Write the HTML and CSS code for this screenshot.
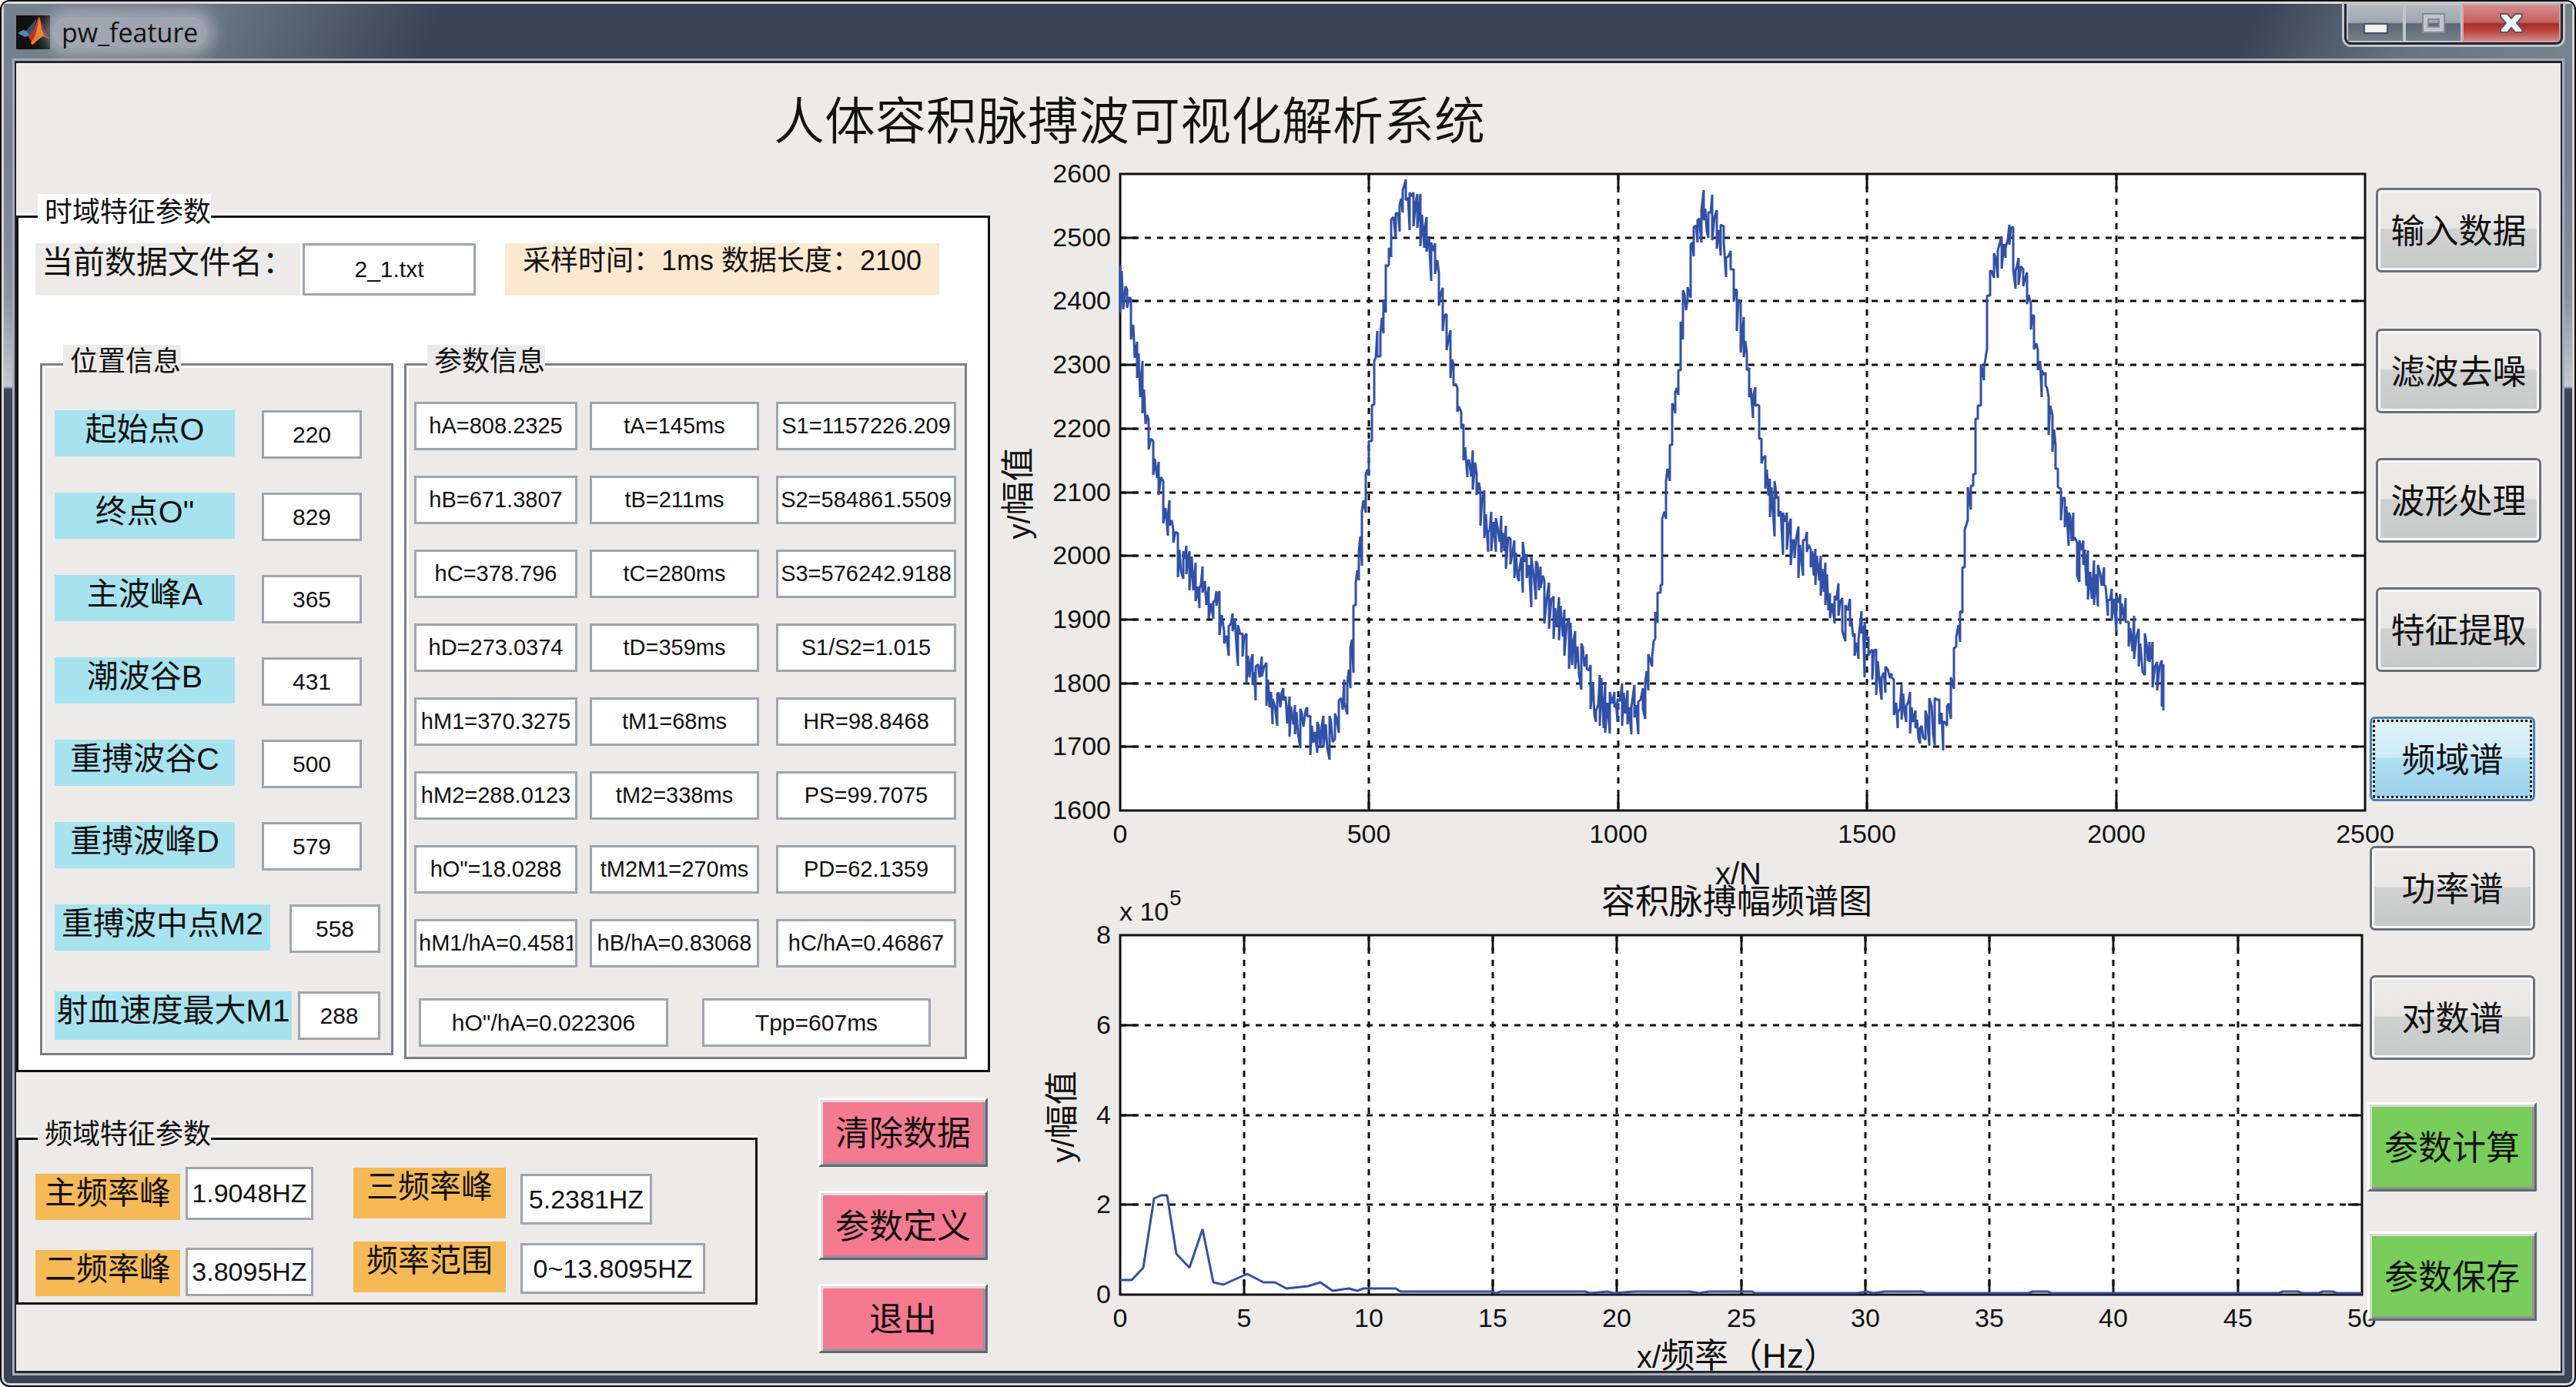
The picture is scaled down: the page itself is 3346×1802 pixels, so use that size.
FILE: index.html
```
<!DOCTYPE html>
<html lang="zh-CN">
<head>
    <meta charset="UTF-8">
    <meta name="viewport" content="width=device-width, initial-scale=1.0">
    <title>pw_feature</title>
    <link rel="stylesheet" href="styles.css">
</head>
<body>
    <div class="window">
        <header class="titlebar">
            <svg class="app-icon" viewBox="0 0 44 44">
                <rect width="44" height="44" fill="#111"/>
                <path d="M2 23 L9 19 L13 20 L22 10 L26 5 L22 20 L15 27 L11 28 Z" fill="#4b87b4"/>
                <path d="M13 20 L22 10 L27 4 L22 20 L17 25 Z" fill="#2c5368"/>
                <path d="M15 27 L22 20 L29 2 L30 2 L30 30 L21 39 L18 31 Z" fill="#b8341c"/>
                <path d="M30 2 L36 18 L43 31 L35 27 L28 32 L21 38 L19 36 L25 26 L28 12 Z" fill="#ee7a26"/>
                <path d="M31 3 L36 17 L43 31 L37 27 L33 18 Z" fill="#8c2416"/>
            </svg>
            <span class="app-name">pw_feature</span>
            <div class="caption">
                <button class="min" aria-label="minimize">
                    <svg viewBox="0 0 32 14"><rect x="1" y="1" width="30" height="12" fill="#f0f0f0" stroke="#4c5166" stroke-width="2"/></svg>
                </button>
                <button class="max" aria-label="maximize">
                    <svg viewBox="0 0 32 28"><path d="M2 2h28v24H2z M9 9h14v10H9z" fill="#c0c5cb" fill-rule="evenodd" stroke="#848c97" stroke-width="2"/></svg>
                </button>
                <button class="close" aria-label="close">
                    <svg viewBox="0 0 32 28"><path d="M2 2h9l5 6 5-6h9v4l-7 8 7 8v4h-9l-5-6-5 6H2v-4l7-8-7-8z" fill="#f2f2f2" stroke="#555768" stroke-width="2"/></svg>
                </button>
            </div>
        </header>

        <div class="client">
            <h1>人体容积脉搏波可视化解析系统</h1>

            <main>
                <section class="left">
                    <fieldset class="panel time">
                        <legend>时域特征参数</legend>
                        <div class="file-row">
                            <label for="file">当前数据文件名：</label>
                            <input id="file" type="text" value="2_1.txt">
                            <p>采样时间：1ms 数据长度：2100</p>
                        </div>
                        <div class="info">
                            <fieldset class="etched">
                                <legend>位置信息</legend>
                                <div class="positions">
                                    <div class="row"><label for="p1">起始点O</label><input id="p1" type="text" value="220"></div>
                                    <div class="row"><label for="p2">终点O"</label><input id="p2" type="text" value="829"></div>
                                    <div class="row"><label for="p3">主波峰A</label><input id="p3" type="text" value="365"></div>
                                    <div class="row"><label for="p4">潮波谷B</label><input id="p4" type="text" value="431"></div>
                                    <div class="row"><label for="p5">重搏波谷C</label><input id="p5" type="text" value="500"></div>
                                    <div class="row"><label for="p6">重搏波峰D</label><input id="p6" type="text" value="579"></div>
                                    <div class="row mid"><label for="p7">重搏波中点M2</label><input id="p7" type="text" value="558"></div>
                                    <div class="row long"><label for="p8">射血速度最大M1</label><input id="p8" type="text" value="288"></div>
                                </div>
                            </fieldset>
                            <fieldset class="etched values">
                                <legend>参数信息</legend>
                                <div class="params">
                                    <input type="text" aria-label="hA" value="hA=808.2325">
                                    <input type="text" aria-label="tA" value="tA=145ms">
                                    <input type="text" aria-label="S1" value="S1=1157226.209">
                                    <input type="text" aria-label="hB" value="hB=671.3807">
                                    <input type="text" aria-label="tB" value="tB=211ms">
                                    <input type="text" aria-label="S2" value="S2=584861.5509">
                                    <input type="text" aria-label="hC" value="hC=378.796">
                                    <input type="text" aria-label="tC" value="tC=280ms">
                                    <input type="text" aria-label="S3" value="S3=576242.9188">
                                    <input type="text" aria-label="hD" value="hD=273.0374">
                                    <input type="text" aria-label="tD" value="tD=359ms">
                                    <input type="text" aria-label="S1/S2" value="S1/S2=1.015">
                                    <input type="text" aria-label="hM1" value="hM1=370.3275">
                                    <input type="text" aria-label="tM1" value="tM1=68ms">
                                    <input type="text" aria-label="HR" value="HR=98.8468">
                                    <input type="text" aria-label="hM2" value="hM2=288.0123">
                                    <input type="text" aria-label="tM2" value="tM2=338ms">
                                    <input type="text" aria-label="PS" value="PS=99.7075">
                                    <input type="text" aria-label="hO" value='hO"=18.0288'>
                                    <input type="text" aria-label="tM2M1" value="tM2M1=270ms">
                                    <input type="text" aria-label="PD" value="PD=62.1359">
                                    <input type="text" aria-label="hM1/hA" value="hM1/hA=0.4581">
                                    <input type="text" aria-label="hB/hA" value="hB/hA=0.83068">
                                    <input type="text" aria-label="hC/hA" value="hC/hA=0.46867">
                                </div>
                                <div class="params-last">
                                    <input class="ratio" type="text" aria-label="hO/hA" value='hO"/hA=0.022306'>
                                    <input class="period" type="text" aria-label="Tpp" value="Tpp=607ms">
                                </div>
                            </fieldset>
                        </div>
                    </fieldset>

                    <div class="bottom">
                        <fieldset class="panel freq">
                            <legend>频域特征参数</legend>
                            <div class="freqs">
                                <div class="col c1">
                                    <label for="f1">主频率峰</label>
                                    <label for="f2">二频率峰</label>
                                </div>
                                <div class="col c2">
                                    <input id="f1" type="text" value="1.9048HZ">
                                    <input id="f2" type="text" value="3.8095HZ">
                                </div>
                                <div class="col c3">
                                    <label for="f3">三频率峰</label>
                                    <label for="f4">频率范围</label>
                                </div>
                                <div class="col c4">
                                    <input id="f3" type="text" value="5.2381HZ">
                                    <input id="f4" type="text" value="0~13.8095HZ">
                                </div>
                            </div>
                        </fieldset>
                        <div class="actions">
                            <button class="flat pink">清除数据</button>
                            <button class="flat pink">参数定义</button>
                            <button class="flat pink">退出</button>
                        </div>
                    </div>
                </section>

                <section class="charts">
                    <svg id="wave" viewBox="0 0 1784 950"></svg>
                    <svg id="spectrum" viewBox="0 0 1784 631"></svg>
                </section>

                <nav class="tools">
                    <button class="win first">输入数据</button>
                    <button class="win shifted">滤波去噪</button>
                    <button class="win shifted">波形处理</button>
                    <button class="win shifted">特征提取</button>
                    <button class="win active">频域谱</button>
                    <button class="win">功率谱</button>
                    <button class="win">对数谱</button>
                    <button class="flat green">参数计算</button>
                    <button class="flat green">参数保存</button>
                </nav>
            </main>
        </div>
    </div>
    <script src="script.js"></script>
</body>
</html>
```
FILE: styles.css
```
* {
    box-sizing: border-box;
}
body {
    margin: 0;
    background: #fff;
    color: #111;
    font-family: "Liberation Sans", "Noto Sans CJK SC", sans-serif;
    font-size: 41px;
}
button, input {
    font-family: inherit;
    color: inherit;
    margin: 0;
}

/* window frame */
.window {
    display: flex;
    flex-direction: column;
    height: 100vh;
    padding: 0 16px 16px 17px;
    border: 2px solid #111;
    border-radius: 12px;
    overflow: hidden;
    background: linear-gradient(#78848f 0, #767f8e 200px, #8a939e 380px, #c5c9d1 500px, #3a4454 504px);
    box-shadow: inset 0 0 0 3px #d4d7da;
}
.titlebar {
    flex: none;
    display: flex;
    align-items: center;
    height: 77px;
    margin: 0 -13px 0 -14px;
    padding: 0 12px 0 16px;
    border-top: 3px solid #dcddde;
    background: linear-gradient(115deg, #76828f 0, #6c7785 8%, #3a4454 17%, #3a4454 87%, #66717f 93%, #78858f 100%);
}
.app-icon {
    width: 44px;
    height: 44px;
}
.app-name {
    margin-left: 3px;
    padding: 0 12px;
    font-family: "Open Sans", sans-serif;
    font-size: 34px;
    line-height: 40px;
    border-radius: 20px;
    background: rgba(178, 184, 192, 0.7);
    box-shadow: 0 0 18px 10px rgba(178, 184, 192, 0.7);
}
.caption {
    align-self: flex-start;
    display: flex;
    height: 53px;
    margin-left: auto;
    border: 3px solid #22262c;
    border-top: 0;
    border-radius: 0 0 9px 9px;
    box-shadow: 0 0 0 3px #bfc6cc;
    overflow: hidden;
}
.caption button {
    display: flex;
    align-items: center;
    justify-content: center;
    width: 75px;
    padding: 0;
    border: 2px solid #c0c6cc;
    background: linear-gradient(#b4b9c0, #a0a7af 48%, #5c6675 52%, #76818e);
}
.caption svg {
    width: 32px;
}
.caption .min {
    padding-top: 14px;
}
.caption .close {
    width: 128px;
    border-color: #d49a9c;
    border-left-color: #e0a0a0;
    background: linear-gradient(#d88a8c, #c4605f 48%, #a32c26 52%, #c04a40 75%, #d08a8c);
}
.client {
    flex: 1;
    min-height: 0;
    border: 3px solid #24272e;
    border-width: 3px 2px;
    box-shadow: 0 0 0 3px #a6adb6;
    background: #ecebe9;
    overflow: hidden;
}
h1 {
    margin: 0;
    height: 118px;
    padding: 37px 0 0 984px;
    font-size: 66px;
    font-weight: 350;
    line-height: 78px;
    white-space: nowrap;
}
main {
    display: grid;
    grid-template-columns: 1269px minmax(0, 1fr) 252px;
}

/* text boxes */
input {
    display: block;
    height: 63px;
    padding: 0 3px;
    border: 3px solid #a0a4ac;
    border-radius: 0;
    background: #fff;
    font-size: 30px;
    text-align: center;
}
label {
    display: block;
    line-height: 50px;
    text-align: center;
    white-space: nowrap;
}

/* group boxes */
fieldset {
    margin: 0;
    padding: 0;
    min-width: 0;
}
legend {
    padding: 0 0 12px 9px;
    font-size: 36px;
    line-height: 47px;
}
.left {
    padding-top: 52px;
}
.panel {
    border: 3px solid #111;
    box-shadow: 0 -3px #fff;
}
.panel > legend {
    margin-left: 25px;
    background: inherit;
}
.time {
    width: 1265px;
    background: #fff;
}
.file-row {
    display: flex;
    padding: 5px 0 0 22px;
}
.file-row label {
    width: 344px;
    height: 68px;
    background: #ecebe9;
}
.file-row input {
    width: 225px;
    height: 68px;
    margin: 0 38px 0 3px;
}
.file-row p {
    width: 564px;
    margin: 0;
    background: #fce9d0;
    font-size: 36px;
    line-height: 45px;
    text-align: center;
}
.info {
    display: flex;
    align-items: flex-start;
    gap: 14px;
    padding: 64px 0 14px 28px;
}
.etched {
    width: 459px;
    border: 3px solid #7b7e86;
    background: #ecebe9;
    box-shadow: inset 3px 3px #fff;
}
.etched > legend {
    margin-left: 27px;
    padding-bottom: 7px;
    line-height: 44px;
    background: #ecebe9;
}
.values {
    width: 731px;
}
.positions {
    display: flex;
    flex-direction: column;
    gap: 44px;
    padding: 34px 0 17px 16px;
}
.row {
    display: flex;
    gap: 35px;
}
.row label {
    width: 234px;
    height: 60px;
    background: #a6e3ee;
}
.row input {
    width: 130px;
}
.row.mid {
    gap: 25px;
}
.mid label {
    width: 280px;
}
.mid input {
    width: 118px;
}
.row.long {
    gap: 8px;
    margin-top: 6px;
}
.long label {
    width: 308px;
    height: 63px;
}
.long input {
    width: 107px;
}
.params {
    display: grid;
    grid-template-columns: 212px 226px 234px;
    gap: 33px 16px;
    padding: 23px 0 0 10px;
}
.params input {
    width: 100%;
    font-size: 29px;
}
.params input:nth-child(3n + 2) {
    max-width: 220px;
}
.params-last {
    display: flex;
    gap: 44px;
    padding: 40px 0 13px 16px;
}
.ratio {
    width: 324px;
}
.period {
    width: 297px;
}

/* frequency panel and buttons under it */
.bottom {
    display: flex;
    align-items: flex-start;
    gap: 79px;
}
.freq {
    width: 963px;
    margin-top: 57px;
    background: #ecebe9;
}
.freqs {
    display: flex;
    padding: 0 0 8px 22px;
}
.col {
    display: flex;
    flex-direction: column;
}
.col label {
    background: #f5b955;
}
.col input {
    font-size: 34px;
}
.c1 {
    width: 195px;
    padding-top: 16px;
    gap: 39px;
}
.c1 label {
    width: 188px;
    height: 60px;
}
.c2 {
    width: 218px;
    padding-top: 7px;
    gap: 36px;
}
.c2 input {
    width: 166px;
}
.c2 input:first-child {
    height: 69px;
}
.c3 {
    width: 217px;
    padding-top: 8px;
    gap: 30px;
}
.c3 label {
    width: 198px;
    height: 66px;
}
.c4 {
    padding-top: 16px;
    gap: 24px;
}
.c4 input {
    width: 240px;
    height: 66px;
}
.c4 input:first-child {
    width: 171px;
}
.actions {
    display: flex;
    flex-direction: column;
    gap: 31px;
    padding-top: 33px;
}

.flat {
    width: 220px;
    padding: 0 0 5px;
    border: 3px solid;
    border-color: #fff #66686e #66686e #fff;
    border-radius: 0;
    font-size: 44px;
    white-space: nowrap;
}
.pink {
    height: 90px;
    background: #f57a8f;
    box-shadow: inset 3px 3px #dddbdb, inset -3px -3px #96979b;
}
.green {
    flex: none;
    height: 116px;
    margin: -3px 0 -3px 1px;
    background: #79cd5b;
    box-shadow: inset 3px 3px #d5dad3, inset -3px -3px #8f9692;
}

/* right-hand tool column */
.tools {
    position: relative;
    display: flex;
    flex-direction: column;
    gap: 58px;
    padding-top: 44px;
}
.win {
    flex: none;
    width: 215px;
    height: 110px;
    margin-left: 4px;
    padding: 0 0 4px;
    border: 3px solid #6c6f75;
    border-radius: 7px;
    background: linear-gradient(#ecebe9 0, #e7e6e4 48%, #d0d0d0 49%, #c8caca 100%);
    box-shadow: inset 0 0 0 3px #f8f8f8;
    font-size: 44px;
    white-space: nowrap;
}
.first {
    margin-left: 12px;
    margin-bottom: 15px;
}
.shifted {
    margin-left: 12px;
}
.active {
    border-color: #4c80ac;
    background: linear-gradient(#e0f2f8 0, #cdecf7 48%, #aee0f4 49%, #9bd0ea 100%);
    box-shadow: inset 0 0 0 3px #dff3fa;
    outline: 3px dotted #111;
    outline-offset: -7px;
}

/* plots */
.charts svg {
    display: block;
    width: 100%;
    height: auto;
    overflow: visible;
}
.plot-area {
    fill: #fff;
}
.frame, .tick, .grid {
    fill: none;
    stroke: #111;
    stroke-width: 3;
}
.grid {
    stroke-dasharray: 8 8;
}
.curve {
    fill: none;
    stroke: #3150a8;
    stroke-width: 3;
    stroke-linejoin: bevel;
}
.num {
    font-size: 34px;
    fill: #111;
}
.exp {
    font-size: 28px;
}
.axis-name {
    font-size: 40px;
    fill: #111;
}
.cjk {
    font-size: 44px;
}
```
FILE: script.js
```
const NS = "http://www.w3.org/2000/svg";

function add(parent, name, attrs, text) {
    const el = document.createElementNS(NS, name);
    for (const key in attrs) el.setAttribute(key, attrs[key]);
    if (text !== undefined) el.textContent = text;
    parent.appendChild(el);
    return el;
}

// axes: white box, dashed grid, solid ticks and numbers
function drawAxes(svg, a) {
    const w = a.right - a.left, h = a.bottom - a.top;
    add(svg, "rect", { class: "plot-area", x: a.left, y: a.top, width: w, height: h });
    a.xs.forEach((v, i) => {
        const x = Math.round(a.left + w * i / (a.xs.length - 1));
        if (i > 0 && i < a.xs.length - 1) {
            add(svg, "path", { class: "grid", d: `M${x} ${a.top}V${a.bottom}` });
            add(svg, "path", { class: "tick", d: `M${x} ${a.top}v20M${x} ${a.bottom}v-20` });
        }
        add(svg, "text", { class: "num", x: x, y: a.bottom + 42, "text-anchor": "middle" }, v);
    });
    a.ys.forEach((v, i) => {
        const y = Math.round(a.bottom - h * i / (a.ys.length - 1));
        if (i > 0 && i < a.ys.length - 1) {
            add(svg, "path", { class: "grid", d: `M${a.left} ${y}H${a.right}` });
            add(svg, "path", { class: "tick", d: `M${a.left} ${y}h22M${a.right} ${y}h-18` });
        }
        add(svg, "text", { class: "num", x: a.left - 12, y: y + 11, "text-anchor": "end" }, v);
    });
    add(svg, "rect", { class: "frame", x: a.left, y: a.top, width: w, height: h });
}

function yName(svg, x, y) {
    const t = add(svg, "text", { class: "axis-name", transform: `translate(${x} ${y}) rotate(-90)`, "text-anchor": "middle" });
    add(t, "tspan", {}, "y/");
    add(t, "tspan", { class: "cjk" }, "幅值");
}

// each entry: position, highest and lowest sample around it
const firstHalf = [
    [305,262,375],[320,320,365],[330,345,440],[343,445,530],[355,490,615],[370,630,700],[380,680,760],[392,730,808],
    [402,775,875],[412,860,905],[417,820,880],[425,890,920],[435,898,1003],[447,940,1007],[455,928,995],[462,940,1033],
    [475,968,1060],[485,1030,1075],[492,978,1040],[505,1025,1102],[515,1060,1102],[523,1035,1070],[530,1035,1140],
    [540,1130,1160],[550,1120,1188],[560,1088,1130],[572,1115,1212],[582,1135,1190],[590,1135,1255],[605,1185,1258],
    [612,1215,1295],[625,1190,1237],[635,1205,1308],[650,1290,1350],[660,1278,1355],[675,1265,1295],[688,1285,1380],
    [700,1305,1375],[712,1315,1408],[728,1310,1330],[735,1330,1423],[750,1345,1418],[765,1330,1405],[778,1330,1435],
    [790,1325,1385],[800,1295,1370],[812,1245,1300],[818,1255,1328],[825,1170,1265],[832,1070,1228],[838,1015,1068],
    [845,940,1010],[852,845,975],[860,760,850],[868,680,760],[874,595,680],[880,490,595],[887,420,480],[893,425,480],
    [900,345,425],[905,262,375],[912,222,262],[918,155,245],[928,140,200],[938,120,185],[945,85,138],[952,60,110],
    [960,92,180],[968,92,172],[978,95,175],[984,95,218],[993,185,222],[999,150,232],[1008,210,300],[1018,212,285],
    [1026,282,360],[1034,318,420],[1044,380,465],[1052,418,530],[1060,498,548],[1068,555,610],[1076,612,650],
    [1082,640,725],[1090,735,765],[1103,702,795],[1112,757,808],[1120,800,880],[1128,797,910],[1138,895,942],
    [1145,848,940],[1155,862,942],[1167,857,945],[1178,880,983],[1188,912,972],[1197,915,1005],[1208,992,1012],
    [1216,918,1040],[1225,948,1005],[1235,953,1073],[1245,965,1055],[1256,978,1028],[1265,1010,1112],[1275,1015,1125],
    [1285,1048,1148],[1297,1050,1152],[1310,1080,1188],[1320,1100,1220],[1335,1130,1220],[1348,1160,1268],
    [1360,1185,1220],[1370,1210,1315],[1382,1320,1345],[1390,1235,1355],[1403,1250,1370],[1413,1275,1373],
    [1423,1275,1310],[1430,1290,1345],[1440,1255,1355],[1452,1270,1350],[1462,1310,1375],[1468,1258,1335],
    [1477,1298,1375],[1487,1265,1315],[1493,1250,1338],[1500,1185,1270],[1508,1190,1215],[1515,1085,1148],
    [1521,1040,1110],[1527,1020,1040],[1532,865,1020],[1540,775,865],[1548,690,775],[1553,590,690],[1560,565,615]
];
const secondHalf = [
    [126,490,545],[130,380,490],[135,308,420],[145,302,330],[150,205,325],[157,165,232],[165,150,200],[172,128,200],
    [177,82,150],[187,133,190],[195,92,195],[204,128,215],[212,160,230],[218,163,200],[223,235,278],[232,220,262],
    [238,262,335],[245,308,400],[252,338,450],[258,370,460],[265,452,490],[270,485,550],[277,550,598],[283,528,570],
    [290,570,645],[294,645,700],[302,682,757],[312,735,822],[322,740,865],[330,775,820],[338,812,908],[346,812,895],
    [355,825,930],[362,878,915],[370,843,960],[380,875,955],[387,855,900],[395,895,935],[405,893,975],[415,910,1000],
    [425,925,1020],[435,995,1050],[443,1000,1062],[451,972,1045],[460,1005,1080],[466,1020,1102],[475,1007,1070],
    [485,1085,1135],[492,1100,1143],[498,1035,1085],[505,1060,1185],[512,1092,1135],[520,1122,1190],[528,1122,1225],
    [540,1185,1235],[548,1160,1220],[560,1175,1185],[565,1190,1270],[573,1265,1300],[580,1200,1280],[590,1250,1285],
    [597,1218,1312],[608,1260,1300],[618,1300,1335],[628,1260,1325],[637,1232,1340],[648,1232,1338],[657,1235,1290],
    [665,1285,1350],[672,1250,1295],[680,1185,1278],[686,1118,1210],[692,1092,1115],[699,1035,1105],[704,935,1038],
    [709,850,935],[715,755,830],[721,750,805],[726,725,750],[730,600,725],[736,570,600],[742,475,570],[748,485,512],
    [754,320,440],[760,265,320],[768,225,280],[776,217,280],[784,187,260],[792,212,235],[800,160,205],[807,165,262],
    [812,265,305],[819,236,297],[828,262,300],[836,268,340],[843,340,398],[850,365,442],[858,445,490],[866,490,550],
    [873,495,525],[880,550,635],[887,590,675],[894,658,712],[899,712,755],[905,757,830],[912,778,845],[920,812,887],
    [930,812,875],[937,880,955],[943,875,968],[950,875,930],[960,897,1008],[972,920,1020],[980,930,1025],
    [992,935,975],[1000,1010,1045],[1009,985,1055],[1018,1000,1082],[1026,997,1065],[1036,1005,1060],[1042,1060,1115],
    [1054,1045,1143],[1063,1075,1160],[1075,1085,1180],[1085,1105,1150],[1092,1105,1208],[1101,1150,1215],
    [1110,1147,1250],[1114,1155,1260]
];

const samples = firstHalf.map(([x, t, b]) => [x / 1.742 - 10, t / 1.823, b / 1.823])
    .concat(secondHalf.map(([x, t, b]) => [x / 1.568 + 810, t / 1.742, b / 1.742]));

let seed = 7;
function rnd() {
    seed = (seed * 16807) % 2147483647;
    return seed / 2147483647;
}

// zigzag between the upper and lower bounds, with smaller swings in between
function wavePath() {
    const pts = [];
    samples.forEach(([x, top, bottom], i) => {
        const next = samples[i + 1];
        const rising = next && next[1] + next[2] < top + bottom;
        pts.push([x, rising ? bottom : top], [x, rising ? top : bottom]);
        if (!next) return;
        const n = Math.floor((next[0] - x) / 2);
        for (let k = 1; k < n; k++) {
            const f = k / n;
            const hi = top + (next[1] - top) * f;
            const lo = bottom + (next[2] - bottom) * f;
            const r = k % 2 ? rnd() * 0.4 : 0.6 + rnd() * 0.4;
            pts.push([x + (next[0] - x) * f, hi + (lo - hi) * r]);
        }
    });
    return "M" + pts.map(p => Math.round(p[0]) + " " + Math.round(p[1])).join("L");
}

const wave = document.getElementById("wave");
drawAxes(wave, {
    left: 165, top: 26, right: 1782, bottom: 853,
    xs: [0, 500, 1000, 1500, 2000, 2500],
    ys: [1600, 1700, 1800, 1900, 2000, 2100, 2200, 2300, 2400, 2500, 2600]
});
add(wave, "path", { class: "curve", d: wavePath() });
add(wave, "text", { class: "axis-name", x: 968, y: 949, "text-anchor": "middle" }, "x/N");
yName(wave, 48, 441);

const spectrum = document.getElementById("spectrum");
drawAxes(spectrum, {
    left: 165, top: 65, right: 1778, bottom: 532,
    xs: [0, 5, 10, 15, 20, 25, 30, 35, 40, 45, 50],
    ys: [0, 2, 4, 6, 8]
});
add(spectrum, "path", {
    class: "curve",
    d: "M165 513H180L195 497L209 407L218 403H226L238 479L255 497L272 447L286 516L299 519L330 505L351 516H366" +
        "L381 524L409 521L425 516L441 527L462 524L473 527L481 524H523L529 528H647L653 530L660 528H769L775 530" +
        "L798 528L806 530L833 528H905L917 530L930 528H986L990 530H1123L1135 528L1143 530L1158 528H1207L1212 530" +
        "H1345L1350 528H1370L1375 530H1670L1675 528H1695L1700 530H1722L1727 528H1740L1745 530H1778"
});
add(spectrum, "text", { class: "axis-name cjk", x: 966, y: 37, "text-anchor": "middle" }, "容积脉搏幅频谱图");
add(spectrum, "text", { class: "num", x: 164, y: 46 }, "x 10");
add(spectrum, "text", { class: "num exp", x: 229, y: 26 }, "5");
const freqName = add(spectrum, "text", { class: "axis-name", x: 836, y: 627 });
add(freqName, "tspan", {}, "x/");
add(freqName, "tspan", { class: "cjk" }, "频率（Hz）");
yName(spectrum, 105, 301);
```
